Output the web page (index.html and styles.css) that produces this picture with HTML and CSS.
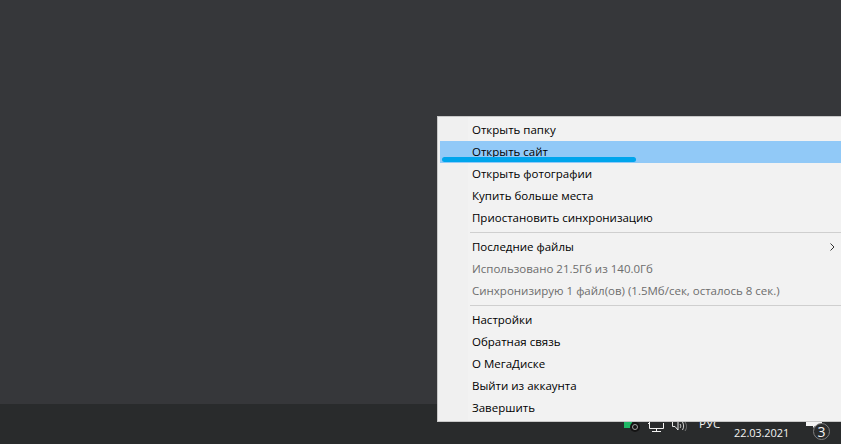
FILE: index.html
```html
<!DOCTYPE html>
<html lang="ru">
<head>
  <meta charset="UTF-8" />
  <title>Меню МегаДиска</title>
  <link rel="stylesheet" href="styles.css">
</head>
<body>
  <div class="desktop"></div>

  <div class="taskbar">
    <div class="tray">
      <svg class="tray-disk" width="16" height="10" viewBox="0 0 16 10">
        <rect x="0" y="0" width="8" height="6" fill="#1fb866" />
        <circle cx="11" cy="5" r="5" fill="#141414" />
        <circle cx="11" cy="5" r="2.5" fill="none" stroke="#a0a0a0" />
      </svg>
      <svg class="tray-net" width="16" height="10" viewBox="0 0 16 10">
        <path d="M0 1.5H2M1.5 0V6.5H15.5V1M8.5 6.5V9M4 9.5H13" fill="none" stroke="#f2f2f2" />
      </svg>
      <svg class="tray-sound" width="16" height="9" viewBox="0 0 16 9">
        <path d="M0.5 0V4.5H3L6 8V0" fill="none" stroke="#e8e8e8" />
        <path d="M8 2C9 3.5 9 5 8 6M10.5 0C12 3 12 5 10.5 8" fill="none" stroke="#d0d0d0" />
        <path d="M13 0C15 3 15 6 13 9" fill="none" stroke="#777" />
      </svg>
      <span class="lang">РУС</span>
      <span class="date">22.03.2021</span>
      <div class="notify">
        <svg width="16" height="7" viewBox="0 0 16 7">
          <path d="M0 0H16V4H9L7 6V4H0Z" fill="#f4f4f4" />
        </svg>
        <span class="notify-count">3</span>
      </div>
    </div>
  </div>

  <div class="menu">
    <div class="menu-item">Открыть папку</div>
    <div class="menu-item active">
      Открыть сайт
      <span class="scribble"></span>
    </div>
    <div class="menu-item">Открыть фотографии</div>
    <div class="menu-item">Купить больше места</div>
    <div class="menu-item">Приостановить синхронизацию</div>
    <div class="menu-sep"></div>
    <div class="menu-item">
      Последние файлы
      <svg class="arrow" width="5" height="8" viewBox="0 0 5 8">
        <path d="M0.5 0.5L4 4L0.5 7.5" fill="none" stroke="#333" />
      </svg>
    </div>
    <div class="menu-item disabled">Использовано 21.5Гб из 140.0Гб</div>
    <div class="menu-item disabled">Синхронизирую 1 файл(ов) (1.5Мб/сек, осталось 8 сек.)</div>
    <div class="menu-sep"></div>
    <div class="menu-item">Настройки</div>
    <div class="menu-item">Обратная связь</div>
    <div class="menu-item">О МегаДиске</div>
    <div class="menu-item">Выйти из аккаунта</div>
    <div class="menu-item">Завершить</div>
  </div>
</body>
</html>
```

FILE: styles.css
```css
html, body {
  margin: 0;
  height: 100%;
  overflow: hidden;
}
body {
  background: #36373a;
  font-family: "Open Sans", "Noto Sans", sans-serif;
  font-size: 11.5px;
  display: flex;
  flex-direction: column;
}
.desktop {
  flex-grow: 1;
}
.taskbar {
  height: 40px;
  background: #292b2c;
  color: #f2f2f2;
  display: flex;
  justify-content: flex-end;
}
.tray {
  display: flex;
  align-items: flex-end;
  height: 40px;
}
.tray-disk {
  margin-bottom: 12px;
}
.tray-net {
  margin: 0 0 12px 8px;
}
.tray-sound {
  margin: 0 0 13px 8px;
}
.lang {
  width: 35px;
  margin: 0 0 12px 11px;
  line-height: 16px;
}
.date {
  width: 72px;
  font-size: 11px;
  letter-spacing: -0.1px;
  line-height: 16px;
  padding-bottom: 3px;
}
.notify {
  position: relative;
  width: 35px;
  height: 40px;
}
.notify svg {
  position: absolute;
  left: 0;
  top: 18px;
}
.notify-count {
  position: absolute;
  left: 7px;
  top: 19px;
  width: 15px;
  height: 15px;
  line-height: 15px;
  border: 1px solid #808080;
  border-radius: 50%;
  background: #292b2c;
  text-align: center;
  font-size: 14px;
}

.menu {
  position: absolute;
  left: 437px;
  top: 116px;
  width: 420px;
  height: 306px;
  box-sizing: border-box;
  padding: 2px;
  background: linear-gradient(to right, #f0f0f0 30px, #f2f2f2 30px);
  border: 1px solid #c8c8c8;
  color: #000;
}
.menu-item {
  position: relative;
  height: 22px;
  line-height: 22px;
  padding-left: 32px;
  white-space: nowrap;
}
.menu-item.active {
  background: #91c9f7;
}
.menu-item.disabled {
  color: #6d6d6d;
}
.menu-sep {
  height: 1px;
  margin: 3px 0 3px 30px;
  background: #cfcfcf;
}
.arrow {
  position: absolute;
  left: 390px;
  top: 7px;
}
.scribble {
  position: absolute;
  left: 2px;
  top: 16px;
  width: 194px;
  height: 5px;
  border-radius: 3px;
  background: #00a5ec;
}
```
